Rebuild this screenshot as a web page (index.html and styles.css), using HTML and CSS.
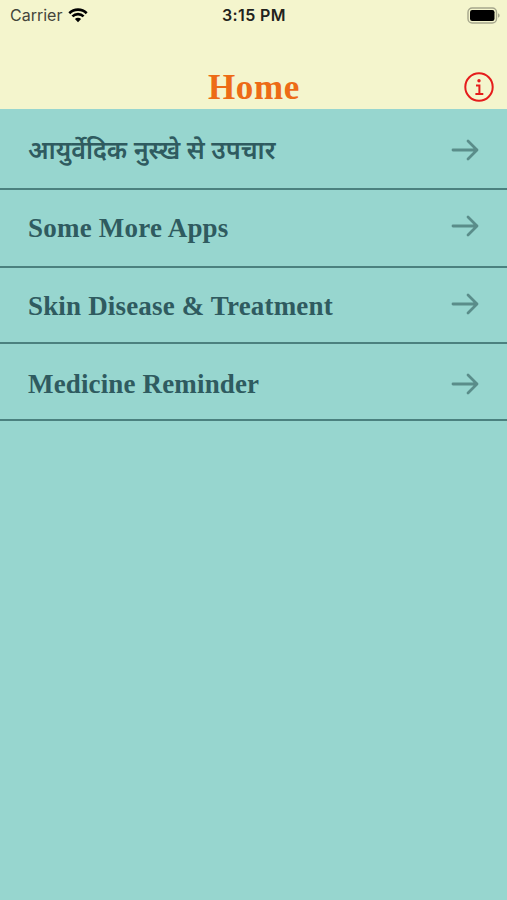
FILE: index.html
```html
<!DOCTYPE html>
<html lang="en">
<head>
  <meta charset="UTF-8" />
  <meta name="viewport" content="width=device-width, initial-scale=1" />
  <title>Home</title>
  <link rel="stylesheet" href="styles.css">
</head>
<body>

  <header class="header">
    <div class="status-bar">
      <div class="carrier">
        <span class="carrier-name">Carrier</span>
        <svg class="wifi" width="20" height="15" viewBox="0 0 20 15">
          <path d="M1.3 5.2a12.4 12.4 0 0 1 17.4 0M4.4 8.4a8 8 0 0 1 11.2 0" />
          <path class="wifi-dot" d="M6.9 11.1a4.4 4.4 0 0 1 6.2 0L10 14.3z" />
        </svg>
      </div>
      <span class="time">3:15 PM</span>
      <svg class="battery" width="33" height="17" viewBox="0 0 33 17">
        <rect class="battery-case" x="1" y="1" width="28.5" height="15" rx="4.2" />
        <rect x="3" y="3" width="24.5" height="11" rx="2.2" />
        <path class="battery-cap" d="M31 6.3c2.2.8 2.2 3.6 0 4.4z" />
      </svg>
    </div>
    <div class="nav-bar">
      <h1 class="nav-title">Home</h1>
      <button class="info-btn" aria-label="Info">
        <svg width="32" height="32" viewBox="0 0 32 32">
          <circle cx="16" cy="16" r="13.7" />
          <path d="M13 14.4h3.4v8.4M12.4 22.9h7.9" />
          <circle class="info-dot" cx="16" cy="9.8" r="1.7" />
        </svg>
      </button>
    </div>
  </header>

  <main class="menu">
    <a class="menu-item item-tall" href="#">
      <span class="menu-label label-hindi" lang="hi">आयुर्वेदिक नुस्खे से उपचार</span>
      <svg class="arrow" width="28" height="24" viewBox="0 0 28 24">
        <path d="M2 12h24M17 3l9 9-9 9" />
      </svg>
    </a>
    <a class="menu-item item-medium" href="#">
      <span class="menu-label label-apps">Some More Apps</span>
      <svg class="arrow" width="28" height="24" viewBox="0 0 28 24">
        <path d="M2 12h24M17 3l9 9-9 9" />
      </svg>
    </a>
    <a class="menu-item" href="#">
      <span class="menu-label label-skin">Skin Disease &amp; Treatment</span>
      <svg class="arrow" width="28" height="24" viewBox="0 0 28 24">
        <path d="M2 12h24M17 3l9 9-9 9" />
      </svg>
    </a>
    <a class="menu-item item-last" href="#">
      <span class="menu-label label-reminder">Medicine Reminder</span>
      <svg class="arrow" width="28" height="24" viewBox="0 0 28 24">
        <path d="M2 12h24M17 3l9 9-9 9" />
      </svg>
    </a>
  </main>

</body>
</html>
```
FILE: styles.css
```css
* {
  box-sizing: border-box;
}
body {
  margin: 0;
  min-height: 100vh;
  background: #97d6cf;
  font-family: "Liberation Serif", serif;
}

/* Header */
.header {
  height: 109px;
  background: #f4f5cd;
}
.status-bar {
  display: grid;
  grid-template-columns: 1fr auto 1fr;
  align-items: center;
  height: 30px;
  padding: 0 7px 0 10px;
  font-family: Inter, sans-serif;
  font-size: 16px;
  color: #22221c;
}
.carrier {
  display: flex;
  align-items: center;
  gap: 6px;
}
.carrier-name {
  color: #44453b;
}
.wifi {
  fill: none;
  stroke: #000;
  stroke-width: 2.6;
}
.wifi-dot {
  fill: #000;
  stroke: none;
}
.time {
  margin-right: 2px;
  font-weight: 600;
  letter-spacing: 0.4px;
}
.battery {
  justify-self: end;
}
.battery-case {
  fill: none;
  stroke: #a5a68c;
  stroke-width: 1.4;
}
.battery-cap {
  fill: #a5a68c;
}
.nav-bar {
  display: grid;
  grid-template-columns: 1fr auto 1fr;
  align-items: center;
  height: 79px;
  padding: 36px 12px 0 0;
}
.nav-title {
  grid-column: 2;
  margin: 0 0 0 13px;
  font-size: 35px;
  line-height: 40px;
  letter-spacing: 0.7px;
  color: #ed6b16;
}
.info-btn {
  justify-self: end;
  height: 32px;
  margin-top: -2px;
  padding: 0;
  border: none;
  background: none;
  cursor: pointer;
}
.info-btn svg {
  display: block;
  fill: none;
  stroke: #e51c1c;
  stroke-width: 2;
}
.info-btn .info-dot {
  fill: #e51c1c;
  stroke: none;
}

/* Menu list */
.menu-item {
  display: flex;
  align-items: center;
  justify-content: space-between;
  height: 76px;
  padding: 0 28px;
  border-bottom: 2px solid #4b817f;
  color: #2f5b60;
  text-decoration: none;
}
.item-tall {
  height: 81px;
  padding-top: 3px;
}
.item-medium {
  height: 78px;
}
.item-last {
  height: 77px;
  padding-top: 5px;
}
.menu-label {
  font-size: 27px;
  font-weight: bold;
  line-height: 32px;
  white-space: nowrap;
}
.label-hindi {
  margin-bottom: 3px;
  font-family: "Noto Sans", sans-serif;
  font-size: 25.2px;
  font-weight: 600;
}
.label-apps {
  letter-spacing: 0.22px;
}
.label-skin {
  margin-top: 2px;
  letter-spacing: 0.17px;
}
.label-reminder {
  letter-spacing: 0.15px;
}
.arrow {
  fill: none;
  stroke: #5a8d8a;
  stroke-width: 2.8;
  stroke-linecap: round;
  stroke-linejoin: round;
}
.item-medium .arrow {
  margin-bottom: 4px;
}
.item-medium + .menu-item .arrow {
  margin-bottom: 2px;
}
```
